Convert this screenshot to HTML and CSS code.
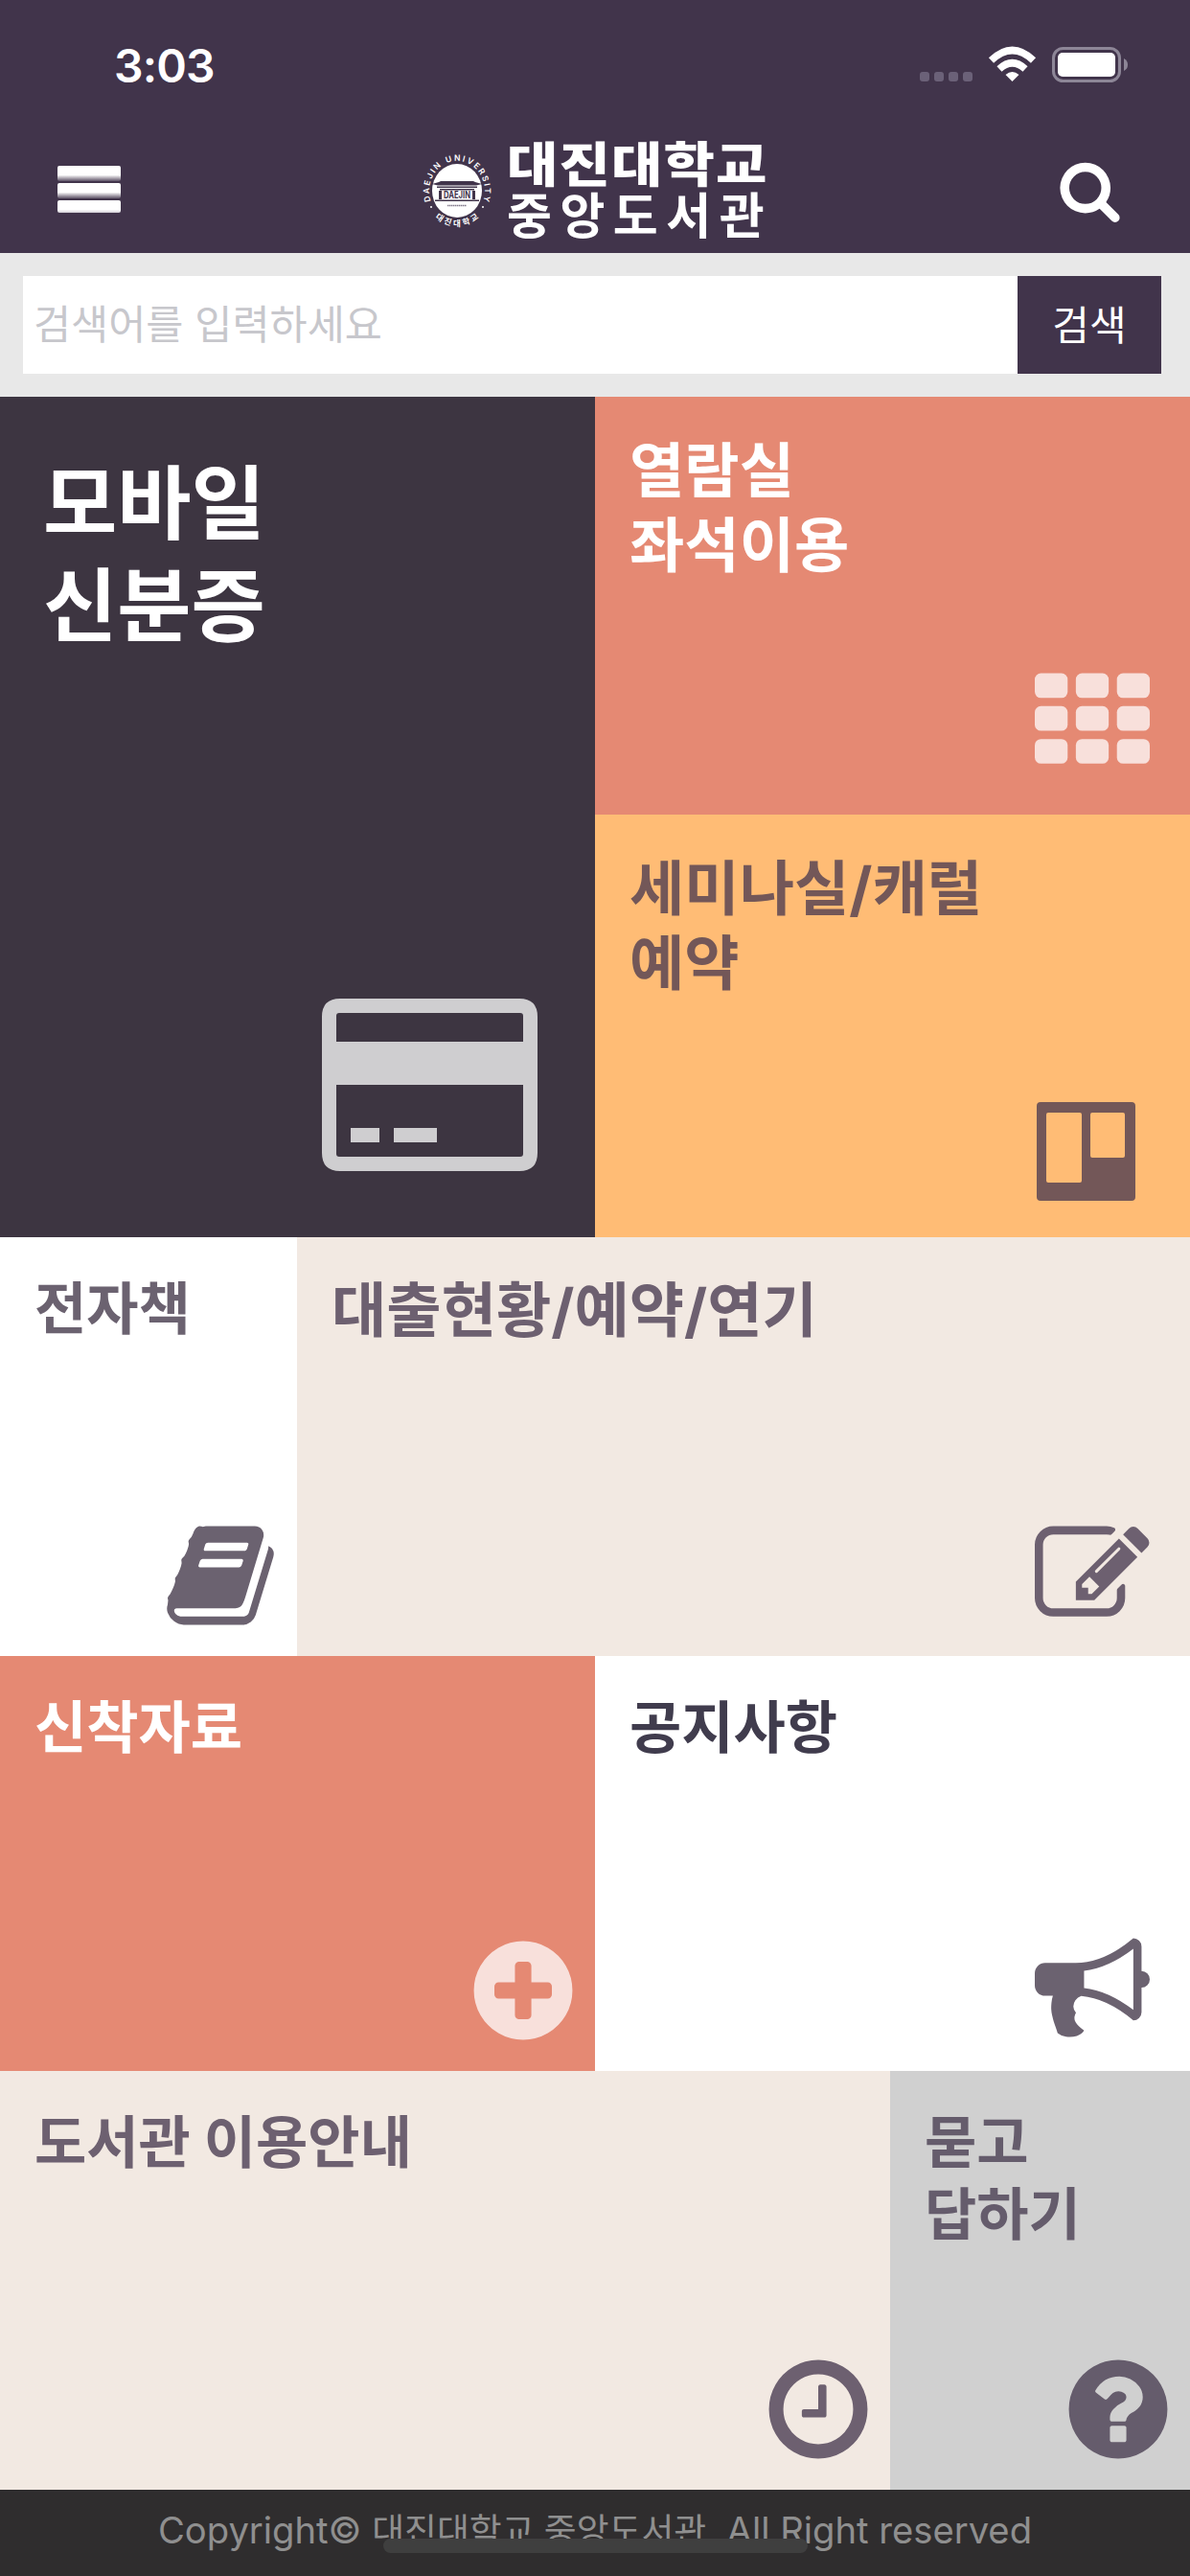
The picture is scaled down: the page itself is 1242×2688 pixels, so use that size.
FILE: index.html
```html
<!DOCTYPE html>
<html lang="ko">
<head>
    <meta charset="UTF-8">
    <meta name="viewport" content="width=device-width, initial-scale=1.0">
    <title>대진대학교 중앙도서관</title>
    <link rel="stylesheet" href="styles.css">
</head>
<body>
    <header class="header">
        <div class="status-bar">
            <span class="time">3:03</span>
            <svg class="status-icons" viewBox="0 0 224 44">
                <g fill="#6b6178">
                    <rect x="2" y="29" width="10" height="10" rx="3"/>
                    <rect x="17" y="29" width="10" height="10" rx="3"/>
                    <rect x="32" y="29" width="10" height="10" rx="3"/>
                    <rect x="47" y="29" width="10" height="10" rx="3"/>
                </g>
                <g fill="none" stroke="#fff" stroke-width="7.5">
                    <path d="M76.500 17Q98.500-4 120.500 17"/>
                    <path d="M85 26Q98.500 13.500 112 26"/>
                </g>
                <path d="M98.500 39l-7-7q7-6 14 0z" fill="#fff"/>
                <rect x="141.500" y="4.500" width="69" height="34" rx="10" fill="none" stroke="#8d8697" stroke-width="3"/>
                <rect x="146" y="9" width="60" height="25" rx="5" fill="#fff"/>
                <path d="M215 15q4 2 4 6.500t-4 6.500z" fill="#8d8697"/>
            </svg>
        </div>
        <div class="nav">
            <button class="menu-button" aria-label="메뉴"><span></span><span></span><span></span></button>
            <a class="logo" href="#">
                <svg class="emblem" viewBox="0 0 76 80">
                    <defs>
                        <path id="ring-top" d="M14 57A29 31.500 0 1 1 62 57"/>
                        <path id="ring-bottom" d="M6 55A36 38.500 0 0 0 70 55"/>
                    </defs>
                    <ellipse cx="38" cy="39" rx="26" ry="28" fill="#fff"/>
                    <text class="ring-text"><textPath href="#ring-top" startOffset="50%" textLength="116">DAEJIN UNIVERSITY</textPath></text>
                    <text class="ring-text ring-text-ko"><textPath href="#ring-bottom" startOffset="50%" textLength="50">대진대학교</textPath></text>
                    <path d="M12 32l7-2 2-1h34l2 1 7 2-6 1.500H18zM17 34.500h42v1.500H17zM20 37h36v1.500H20zM19 39h3v9h-3zM54 39h3v9h-3zM15 48.500h46v1.500H15z" fill="#41344b"/>
                    <text class="gate-text" x="38" y="47" textLength="28" lengthAdjust="spacingAndGlyphs">DAEJIN</text>
                    <path d="M28 54.500h20" stroke="#81788a" stroke-width="1.500" stroke-dasharray="1.500 .5"/>
                    <circle cx="11" cy="56" r="1" fill="#fff"/>
                    <circle cx="65" cy="56" r="1" fill="#fff"/>
                </svg>
                <span class="logo-text">
                    <span class="logo-univ">대진대학교</span>
                    <span class="logo-lib">중앙도서관</span>
                </span>
            </a>
            <button class="search-toggle" aria-label="검색">
                <svg viewBox="0 0 1792 1792"><path d="M1216 832q0-185-131.500-316.500t-316.500-131.500-316.500 131.500-131.500 316.500 131.500 316.500 316.500 131.500 316.500-131.500 131.500-316.500zm512 832q0 52-38 90t-90 38q-54 0-90-38l-343-342q-179 124-399 124-143 0-273.500-55.500t-225-150-150-225-55.500-273.500 55.500-273.500 150-225 225-150 273.500-55.500 273.500 55.500 225 150 150 225 55.500 273.500q0 220-124 399l343 343q37 37 37 90z"/></svg>
            </button>
        </div>
    </header>

    <form class="search-form">
        <input type="text" placeholder="검색어를 입력하세요">
        <button type="button">검색</button>
    </form>

    <main class="tiles">
        <a class="tile mobile-id" href="#">
            <h2>모바일<br>신분증</h2>
            <svg class="icon" viewBox="0 0 225 180">
                <path fill-rule="evenodd" d="M19 0h187q19 0 19 19v142q0 19-19 19H19q-19 0-19-19V19Q0 0 19 0zM18 15q-3 0-3 3v27h195V18q0-3-3-3zM15 90v72q0 3 3 3h189q3 0 3-3V90zM30 135h30v15H30zM75 135h45v15H75z"/>
            </svg>
        </a>
        <a class="tile seats" href="#">
            <h2>열람실<br>좌석이용</h2>
            <svg class="icon" viewBox="0 0 1792 1792">
                <rect x="0" y="128" width="512" height="384" rx="96"/>
                <rect x="640" y="128" width="512" height="384" rx="96"/>
                <rect x="1280" y="128" width="512" height="384" rx="96"/>
                <rect x="0" y="640" width="512" height="384" rx="96"/>
                <rect x="640" y="640" width="512" height="384" rx="96"/>
                <rect x="1280" y="640" width="512" height="384" rx="96"/>
                <rect x="0" y="1152" width="512" height="384" rx="96"/>
                <rect x="640" y="1152" width="512" height="384" rx="96"/>
                <rect x="1280" y="1152" width="512" height="384" rx="96"/>
            </svg>
        </a>
        <a class="tile seminar" href="#">
            <h2>세미나실/캐럴<br>예약</h2>
            <svg class="icon" viewBox="0 0 103 103">
                <path fill-rule="evenodd" d="M4 0h95q4 0 4 4v95q0 4-4 4H4q-4 0-4-4V4Q0 0 4 0zM12 11q-2 0-2 2v69q0 2 2 2h33q2 0 2-2V13q0-2-2-2zM58 11q-2 0-2 2v43q0 2 2 2h32q2 0 2-2V13q0-2-2-2z"/>
            </svg>
        </a>
        <a class="tile ebook" href="#">
            <h2>전자책</h2>
            <svg class="icon" viewBox="0 0 1792 1792"><path d="M1703 478q40 57 18 129l-275 906q-19 64-76.500 107.500t-122.500 43.500h-923q-77 0-148.500-53.500t-99.500-131.500q-24-67-2-127 0-4 3-27t4-37q1-8-3-21.500t-3-19.500q2-11 8-21t16.500-23.500 16.500-23.500q23-38 45-91.500t30-91.500q3-10 .5-30t-.5-28q3-11 17-28t17-23q21-36 42-92t25-90q1-9-2.500-32t.5-28q4-13 22-30.500t22-22.500q19-26 42.500-84.500t27.500-96.500q1-8-3-25.500t-2-26.500q2-8 9-18t18-23 17-21q8-12 16.500-30.500t15-35 16-36 19.500-32 26.500-23.500 36-11.500 47.500 5.500l-1 3q38-9 51-9h761q74 0 114 56t18 130l-274 906q-36 119-71.500 153.500t-128.500 34.500h-869q-27 0-38 15-11 16-1 43 24 70 144 70h923q29 0 56-15.500t35-41.500l300-987q7-22 5-57 38 15 59 43zm-1064 2q-4 13 2 22.500t20 9.500h608q13 0 25.500-9.500t16.500-22.500l21-64q4-13-2-22.500t-20-9.500h-608q-13 0-25.500 9.500t-16.500 22.500zm-83 256q-4 13 2 22.500t20 9.500h608q13 0 25.500-9.500t16.500-22.500l21-64q4-13-2-22.500t-20-9.500h-608q-13 0-25.500 9.500t-16.500 22.500z"/></svg>
        </a>
        <a class="tile loans" href="#">
            <h2>대출현황/예약/연기</h2>
            <svg class="icon" viewBox="0 0 1792 1792"><path d="M888 1184l116-116-152-152-116 116v56h96v96h56zm440-720q-16-16-33 1l-350 350q-17 17-1 33t33-1l350-350q17-17 1-33zm80 594v190q0 119-84.500 203.500t-203.500 84.500h-832q-119 0-203.500-84.500t-84.500-203.500v-832q0-119 84.500-203.500t203.500-84.500h832q63 0 117 25 15 7 18 23 3 17-9 29l-49 49q-14 14-32 8-23-6-45-6h-832q-66 0-113 47t-47 113v832q0 66 47 113t113 47h832q66 0 113-47t47-113v-126q0-13 9-22l64-64q15-15 35-7t20 29zm-96-738l288 288-672 672h-288v-288zm444 132l-92 92-288-288 92-92q28-28 68-28t68 28l152 152q28 28 28 68t-28 68z"/></svg>
        </a>
        <a class="tile arrivals" href="#">
            <h2>신착자료</h2>
            <svg class="icon" viewBox="0 0 1792 1792"><path d="M1344 960v-128q0-26-19-45t-45-19h-256v-256q0-26-19-45t-45-19h-128q-26 0-45 19t-19 45v256h-256q-26 0-45 19t-19 45v128q0 26 19 45t45 19h256v256q0 26 19 45t45 19h128q26 0 45-19t19-45v-256h256q26 0 45-19t19-45zm320-64q0 209-103 385.500t-279.500 279.500-385.500 103-385.500-103-279.500-279.500-103-385.500 103-385.500 279.500-279.500 385.500-103 385.500 103 279.500 279.500 103 385.500z"/></svg>
        </a>
        <a class="tile notice" href="#">
            <h2>공지사항</h2>
            <svg class="icon" viewBox="0 0 1792 1792"><path d="M1664 640q53 0 90.500 37.500t37.500 90.500-37.500 90.500-90.500 37.500v384q0 52-38 90t-90 38q-417-347-812-380-58 19-91 66t-31 100.500 40 92.500q-20 33-23 65.500t6 58 33.500 55 48 50 61.500 50.500q-29 58-111.500 83t-168.500 11.500-132-55.500q-7-23-29.500-87.500t-32-94.500-23-89-15-101 3.500-98.500 22-110.500h-122q-66 0-113-47t-47-113v-192q0-66 47-113t113-47h480q435 0 896-384 52 0 90 38t38 90v384zm-128 604v-954q-394 302-768 343v270q377 42 768 341z"/></svg>
        </a>
        <a class="tile guide" href="#">
            <h2>도서관 이용안내</h2>
            <svg class="icon" viewBox="0 0 1792 1792"><path d="M1024 544v448q0 14-9 23t-23 9h-320q-14 0-23-9t-9-23v-64q0-14 9-23t23-9h224v-352q0-14 9-23t23-9h64q14 0 23 9t9 23zm416 352q0-148-73-273t-198-198-273-73-273 73-198 198-73 273 73 273 198 198 273 73 273-73 198-198 73-273zm224 0q0 209-103 385.500t-279.500 279.500-385.500 103-385.500-103-279.500-279.500-103-385.500 103-385.500 279.500-279.500 385.500-103 385.500 103 279.500 279.500 103 385.500z"/></svg>
        </a>
        <a class="tile qna" href="#">
            <h2>묻고<br>답하기</h2>
            <svg class="icon" viewBox="0 0 1792 1792"><path d="M1024 1376v-192q0-14-9-23t-23-9h-192q-14 0-23 9t-9 23v192q0 14 9 23t23 9h192q14 0 23-9t9-23zm256-672q0-88-55.500-163t-138.500-116-170-41q-243 0-371 213-15 24 8 42l132 100q7 6 19 6 16 0 25-12 53-68 86-92 34-24 86-24 48 0 85.500 26t37.500 59q0 38-20 61t-68 45q-63 28-115.500 86.500t-52.500 125.500v36q0 14 9 23t23 9h192q14 0 23-9t9-23q0-19 21.500-49.500t54.500-49.500q32-18 49-28.500t46-35 44.500-48 28-60.500 12.500-81zm384 192q0 209-103 385.500t-279.500 279.500-385.500 103-385.500-103-279.500-279.500-103-385.500 103-385.500 279.500-279.500 385.500-103 385.500 103 279.500 279.500 103 385.500z"/></svg>
        </a>
    </main>

    <footer class="footer">
        <p>Copyright© <span>대진대학교 중앙도서관</span>&nbsp; All Right reserved</p>
        <div class="home-indicator"></div>
    </footer>
</body>
</html>
```
FILE: styles.css
```css
* {
    box-sizing: border-box;
}
body {
    margin: 0;
    width: 1242px;
    font-family: Inter, "Noto Sans CJK KR", sans-serif;
    background-color: #2f2d2e;
}
button {
    border: none;
    padding: 0;
    background: none;
}
a {
    color: inherit;
    text-decoration: none;
}

/* Header */
.header {
    height: 264px;
    background-color: #41344b;
    color: #fff;
}
.status-bar {
    height: 136px;
    padding: 0 60px 0 119px;
    display: flex;
    justify-content: space-between;
    align-items: center;
}
.time {
    font-size: 48px;
    font-weight: 600;
    letter-spacing: -0.8px;
}
.status-icons {
    width: 224px;
    height: 44px;
}
.nav {
    height: 128px;
    padding: 0 71px 0 60px;
    display: flex;
    justify-content: space-between;
    align-items: flex-start;
}
.menu-button {
    width: 66px;
    margin-top: 37px;
    display: flex;
    flex-direction: column;
    gap: 2px;
}
.menu-button span {
    height: 16px;
    border-radius: 2px;
    background: linear-gradient(#fff 60%, #5d5266);
}
.menu-button span:last-child {
    height: 13px;
    background: linear-gradient(#fff 75%, #d0ccd4);
}
.logo {
    display: flex;
    margin-left: 14px;
}
.emblem {
    width: 76px;
    height: 80px;
    margin: 24px 14px 0 0;
    overflow: visible;
}
.ring-text {
    font-size: 8.5px;
    font-weight: 600;
    fill: #fff;
    text-anchor: middle;
}
.ring-text-ko {
    font-size: 8.5px;
}
.gate-text {
    font-size: 10px;
    font-weight: 700;
    fill: #41344b;
    text-anchor: middle;
}
.logo-text {
    display: flex;
    flex-direction: column;
    width: 276px;
    margin-top: 9px;
    white-space: nowrap;
}
.logo-univ {
    font-size: 50px;
    font-weight: 900;
    line-height: 54px;
    letter-spacing: 1px;
    transform: scaleX(1.16);
    transform-origin: left;
}
.logo-lib {
    font-size: 51px;
    font-weight: 700;
    line-height: 54px;
    letter-spacing: 8.5px;
}
.search-toggle {
    margin-top: 29px;
}
.search-toggle svg {
    display: block;
    width: 67px;
    height: 67px;
    fill: #fff;
    overflow: visible;
}

/* Search */
.search-form {
    height: 150px;
    padding: 24px 30px 24px 24px;
    display: flex;
    background-color: #e8e8e8;
}
.search-form input {
    flex: 1;
    border: none;
    padding: 0 11px 2px;
    font-family: inherit;
    font-size: 42.5px;
    background-color: #fff;
}
.search-form input::placeholder {
    color: #c7c7cc;
    opacity: 1;
}
.search-form button {
    width: 150px;
    padding-bottom: 5px;
    font-family: inherit;
    font-size: 42px;
    color: #fff;
    background-color: #41344b;
}

/* Menu tiles */
.tiles {
    display: grid;
    grid-template-columns: 310px 311px 308px 313px;
    grid-template-rows: 436px 441px 437px 433px 437px;
}
.tile {
    display: flex;
    flex-direction: column;
    justify-content: space-between;
    padding: 37px 42px 24px 36px;
    color: #6d6070;
}
.tile h2 {
    margin: 0;
    font-size: 59px;
    font-weight: 700;
    line-height: 75px;
    white-space: nowrap;
}
.icon {
    align-self: flex-end;
    width: 120px;
    height: 120px;
    fill: currentColor;
}
.mobile-id {
    grid-column: 1 / 3;
    grid-row: 1 / 3;
    padding: 58px 60px 69px 45px;
    color: #fff;
    background-color: #3d3541;
}
.mobile-id h2 {
    font-size: 84px;
    line-height: 107px;
}
.mobile-id .icon {
    width: 225px;
    height: 180px;
    fill: #cfced0;
}
.seats {
    grid-column: 3 / 5;
    padding-top: 39px;
    color: #fff;
    background-color: #e58973;
}
.seats .icon {
    fill: #f8e0db;
    margin-bottom: 12px;
}
.seats h2, .seminar h2 {
    font-size: 62.3px;
    line-height: 78px;
}
.seminar {
    grid-column: 3 / 5;
    padding-top: 39px;
    padding-right: 57px;
    padding-bottom: 38px;
    color: #735758;
    background-color: #ffbc75;
}
.seminar .icon {
    width: 103px;
    height: 103px;
}
.ebook {
    padding-right: 20px;
    color: #6b6270;
    background-color: #fff;
}
.loans {
    grid-column: 2 / 5;
    padding-top: 38px;
    background-color: #f2e9e2;
}
.loans h2 {
    font-size: 62.3px;
    line-height: 78px;
}
.arrivals {
    grid-column: 1 / 3;
    padding-right: 15px;
    color: #fff;
    background-color: #e58973;
}
.arrivals .icon {
    fill: #f8e0db;
}
.notice {
    grid-column: 3 / 5;
    padding-bottom: 27px;
    color: #403c4d;
    background-color: #fff;
}
.notice .icon {
    fill: #6b6270;
}
.guide {
    grid-column: 1 / 4;
    padding-right: 15px;
    background-color: #f2e9e2;
}
.qna {
    padding-right: 15px;
    color: #655c6c;
    background-color: #d0d0d0;
}

/* Footer */
.footer {
    position: relative;
    height: 90px;
    text-align: center;
    color: #8f8f8f;
    background-color: #2f2d2e;
}
.footer p {
    margin: 0;
    font-size: 38.2px;
    line-height: 85px;
    white-space: nowrap;
}
.footer span {
    font-size: 36.8px;
}
.home-indicator {
    position: absolute;
    left: 400px;
    bottom: 24px;
    width: 443px;
    height: 15px;
    border-radius: 8px;
    background-color: #3f3f3f;
}
```
